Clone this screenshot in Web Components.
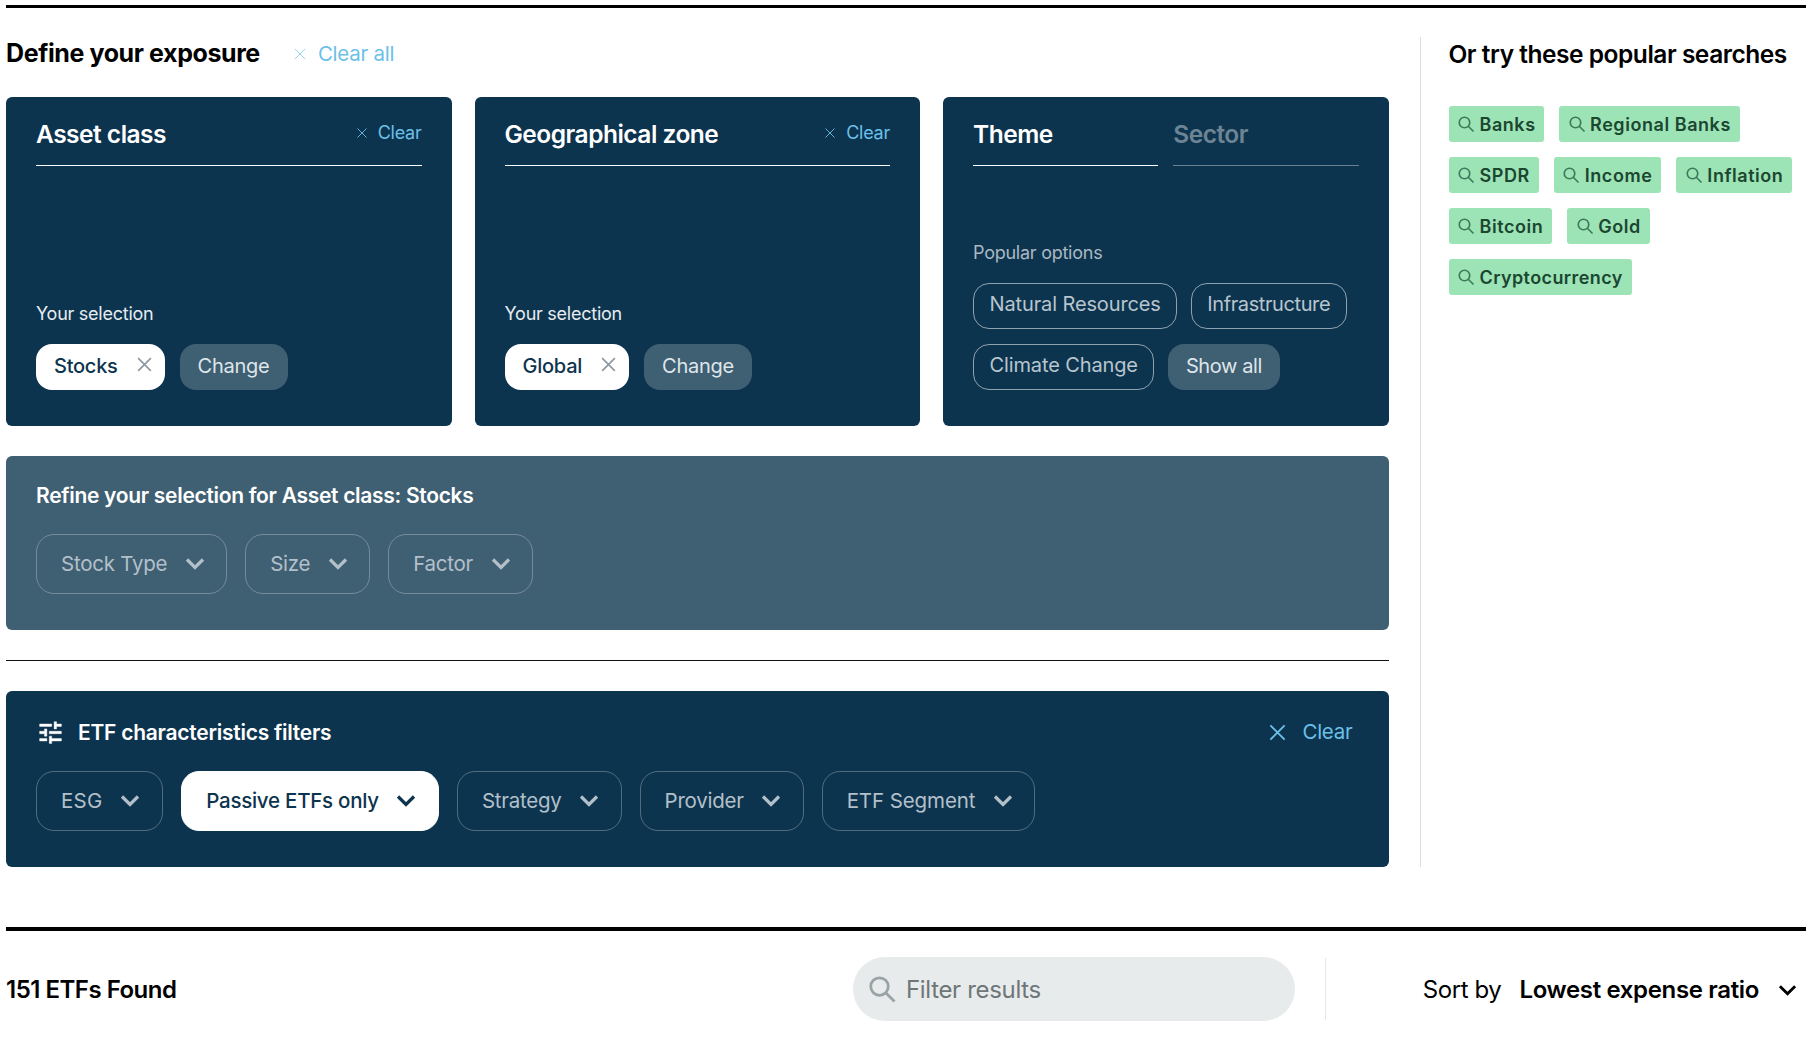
<!DOCTYPE html>
<html lang="en"><head><meta charset="utf-8"><title>ETF screener</title>
<style>
html,body{margin:0;padding:0;background:#fff}
body{font-family:Inter,"Liberation Sans",sans-serif;color:#000;overflow:hidden}
</style></head><body>
<etf-screen></etf-screen>
<script>
const X=(s,w=1.6)=>`<svg width="${s}" height="${s}" viewBox="0 0 16 16" fill="none" stroke="currentColor" stroke-width="${w}"><path d="M2 2 14 14M14 2 2 14"/></svg>`;
const CH=(w,h,sw=3)=>`<svg width="${w}" height="${h}" viewBox="0 0 20 12" fill="none" stroke="currentColor" stroke-width="${sw}" stroke-linejoin="miter"><path d="M2 2l8 8 8-8"/></svg>`;
const SEARCH=(s,sw=2)=>`<svg width="${s}" height="${s}" viewBox="0 0 24 24" fill="none" stroke="currentColor" stroke-width="${sw}"><circle cx="10" cy="10" r="7"/><path d="M15 15l7 7"/></svg>`;
const TUNE=`<svg width="29" height="29" viewBox="0 0 24 24" fill="#fff" stroke="#fff" stroke-width=".35"><path d="M3 17v2h6v-2H3zM3 5v2h10V5H3zm10 16v-2h8v-2h-8v-2h-2v6h2zM7 9v2H3v2h4v2h2V9H7zm14 4v-2H11v2h10zm-6-4h2V7h4V5h-4V3h-2v6z"/></svg>`;
function def(name,css,html){
  customElements.define(name,class extends HTMLElement{
    constructor(){super();const r=this.attachShadow({mode:'open'});
      r.innerHTML=`<style>${css}</style>`+(typeof html==='function'?html(this):html);}
  });
}
def('clear-link',`:host{display:inline-flex;align-items:center;gap:var(--g,10px);color:#6cc0e8;font-size:var(--fs,18px);font-weight:400;letter-spacing:-.25px;line-height:1}
svg{display:block;opacity:var(--xo,1)}`,el=>`${X(+el.getAttribute('x')||12,+el.getAttribute('w')||1.4)}<slot></slot>`);
def('sel-chip',`:host{display:inline-flex;align-items:center;height:46px;box-sizing:border-box;border-radius:16px;font-size:20px;letter-spacing:-.25px;padding:0 18px 2px;white-space:nowrap}
:host([kind=white]){background:#fff;color:#0d344e;font-weight:500;gap:18px;padding:0 12px 2px 18px}
:host([kind=white]) svg{color:#8b98a2;margin-top:-3px}
:host([kind=grey]){background:#3f5f73;color:#dfe6ea;}
:host([kind=line]){border:1px solid #8fa2af;color:#b8c5ce;padding:0 15.5px 4px;letter-spacing:-.12px}
svg{display:block}`,el=>`<slot></slot>${el.getAttribute('kind')==='white'?X(17,1.5):''}`);
def('filter-btn',`:host{display:inline-flex;align-items:center;height:60px;box-sizing:border-box;border:1px solid rgba(255,255,255,.28);border-radius:18px;padding:0 21.5px 1px 24px;gap:17.5px;font-size:20.5px;letter-spacing:var(--ls,-.25px);color:#b3c0ca;white-space:nowrap}
:host([on]){background:#fff;border-color:#fff;color:#0d344e;font-weight:500}
svg{display:block;flex:none}`,`<slot></slot>${CH(20,13,3.2)}`);
def('pop-tag',`:host{display:inline-flex;align-items:center;height:36px;box-sizing:border-box;background:#9ce3b6;border-radius:3px;padding:0 9px 0 8.5px;gap:4.5px;font-size:18px;font-weight:600;letter-spacing:.55px;color:#1b4630;white-space:nowrap}
svg{color:#3d7a5a;display:block;flex:none}`,`${SEARCH(18,2.2)}<slot></slot>`);
def('card-head',`:host{display:flex;flex:1;justify-content:space-between;align-items:center;height:69px;box-sizing:border-box;padding-top:5px;border-bottom:1px solid #fff;font-size:24.5px;font-weight:600;letter-spacing:-.5px;color:#fff;white-space:nowrap}
:host([dim]){border-bottom:1px solid #6a8091;color:#6d8494}`,`<slot></slot><slot name="end"></slot>`);
def('sel-card',`:host{display:flex;flex-direction:column;height:329px;box-sizing:border-box;background:#0d344e;border-radius:6px;padding:0 30px 36px;color:#fff}
.h{display:flex;gap:15px}
.b{margin-top:auto;display:flex;flex-direction:column;gap:19px}
.l{font-size:18px;letter-spacing:-.25px;line-height:22px;color:var(--lc,#e6ecf0)}
.c{display:flex;flex-wrap:wrap;gap:15px}`,`<div class="h"><slot name="head"></slot></div><div class="b"><div class="l"><slot name="label"></slot></div><div class="c"><slot></slot></div></div>`);
def('refine-panel',`:host{display:block;background:#3f5f73;border-radius:6px;height:174px;box-sizing:border-box;padding:28px 30px 0;color:#fff}
.t{font-size:21px;font-weight:600;letter-spacing:-.3px;line-height:24px;margin-bottom:26px}
.r{display:flex;gap:18px}`,`<div class="t"><slot name="title"></slot></div><div class="r"><slot></slot></div>`);
def('etf-panel',`:host{display:block;background:#0d344e;border-radius:6px;height:176px;box-sizing:border-box;padding:26px 36px 0 30px;color:#fff;--ls:-.13px}
.t{display:flex;align-items:center;height:30px;margin-bottom:24px;font-size:21px;font-weight:600;letter-spacing:-.25px;gap:13px}
.e{margin-left:auto;padding-top:4px}
svg{display:block}
.r{display:flex;gap:18px}`,`<div class="t">${TUNE}<slot name="title"></slot><span class="e"><slot name="end"></slot></span></div><div class="r"><slot></slot></div>`);
def('side-searches',`:host{display:block;border-left:1px solid #ddd;margin-top:29px;padding:0 0 0 28px;box-sizing:border-box}
h2{margin:0;font-size:24.5px;font-weight:600;letter-spacing:-.47px;line-height:32px;color:#000;white-space:nowrap;margin-bottom:36px;padding-top:1px}
.w{display:flex;flex-wrap:wrap;gap:15px;width:350px}`,`<h2><slot name="title"></slot></h2><div class="w"><slot></slot></div>`);
def('result-bar',`:host{display:flex;align-items:center;border-top:4px solid #000;height:90px;padding:12.5px 9px 0 0;box-sizing:content-box}
.n{font-size:24px;font-weight:600;letter-spacing:-.5px;width:847px;flex:none;padding-top:2px}
.s{display:flex;align-items:center;gap:9px;width:441.5px;height:64px;box-sizing:border-box;background:#e7ebeb;border-radius:32px;padding-left:14px;font-size:24px;letter-spacing:-.33px;color:#6e7678;flex:none}
.s span{padding-top:2px}
.s svg{color:#9aa3a6;display:block}
.d{width:1px;height:62px;background:#e4e6e7;margin:0 0 0 30px;flex:none}
.o{font-size:24px;letter-spacing:-.4px;white-space:nowrap;display:flex;align-items:center;flex:none;margin-left:auto;padding-top:2px}
.o b{font-weight:600;margin-left:18px;letter-spacing:-.35px}
.o svg{margin-left:19px;display:block}`,`<div class="n"><slot name="count"></slot></div><div class="s">${SEARCH(30,2.2)}<span>Filter results</span></div><div class="d"></div><div class="o">Sort by<b>Lowest expense ratio</b>${CH(19,12,3)}</div>`);
def('etf-screen',`:host{display:block;box-sizing:border-box;width:1813px;padding:5px 7px 0 6px}
.top{border-top:3px solid #000}
.m{display:grid;grid-template-columns:1382.5px 1fr;column-gap:31px;margin-bottom:60px}
.hd{display:flex;align-items:center;height:38px;margin:26px 0 25px;gap:33px}
.hd b{font-size:25px;font-weight:700;letter-spacing:-.4px;line-height:38px}
.g{display:grid;grid-template-columns:repeat(3,1fr);gap:23px}
.sp{height:30px}
hr{border:0;border-top:1px solid #111;margin:30px 0 30px}
`,`<div class="top"></div><div class="m"><div>
<div class="hd"><b>Define your exposure</b><clear-link x="14" w="1.1" style="--fs:20.5px;--g:11px;--xo:.7;margin-top:2px">Clear all</clear-link></div>
<div class="g">
<sel-card><card-head slot="head">Asset class<clear-link slot="end" x="12" w="1.2" style="margin-top:-2px">Clear</clear-link></card-head><span slot="label">Your selection</span><sel-chip kind="white">Stocks</sel-chip><sel-chip kind="grey">Change</sel-chip></sel-card>
<sel-card><card-head slot="head">Geographical zone<clear-link slot="end" x="12" w="1.2" style="margin-top:-2px">Clear</clear-link></card-head><span slot="label">Your selection</span><sel-chip kind="white">Global</sel-chip><sel-chip kind="grey">Change</sel-chip></sel-card>
<sel-card style="--lc:#a9b8c3"><card-head slot="head">Theme</card-head><card-head slot="head" dim>Sector</card-head><span slot="label">Popular options</span><sel-chip kind="line" style="padding-right:15px">Natural Resources</sel-chip><sel-chip kind="line" style="letter-spacing:-.4px;margin-left:-1px">Infrastructure</sel-chip><sel-chip kind="line" style="padding-right:15px">Climate Change</sel-chip><sel-chip kind="grey" style="letter-spacing:-.4px;margin-left:-1px">Show all</sel-chip></sel-card>
</div>
<div class="sp"></div>
<refine-panel><span slot="title">Refine your selection for Asset class: Stocks</span><filter-btn>Stock Type</filter-btn><filter-btn>Size</filter-btn><filter-btn>Factor</filter-btn></refine-panel>
<hr>
<etf-panel><span slot="title">ETF characteristics filters</span><clear-link slot="end" x="19" w="1.6" style="--fs:20.5px;--g:15px">Clear</clear-link><filter-btn style="--ls:.3px;padding-right:22px">ESG</filter-btn><filter-btn on style="--ls:-.25px">Passive ETFs only</filter-btn><filter-btn style="--ls:-.25px">Strategy</filter-btn><filter-btn style="--ls:-.25px">Provider</filter-btn><filter-btn style="--ls:-.1px">ETF Segment</filter-btn></etf-panel>
</div>
<side-searches><span slot="title">Or try these popular searches</span><pop-tag style="padding-right:8.5px">Banks</pop-tag><pop-tag>Regional Banks</pop-tag><pop-tag>SPDR</pop-tag><pop-tag>Income</pop-tag><pop-tag>Inflation</pop-tag><pop-tag>Bitcoin</pop-tag><pop-tag>Gold</pop-tag><pop-tag style="letter-spacing:.4px">Cryptocurrency</pop-tag></side-searches>
</div>
<result-bar><span slot="count">151 ETFs Found</span></result-bar>`);
</script></body></html>
